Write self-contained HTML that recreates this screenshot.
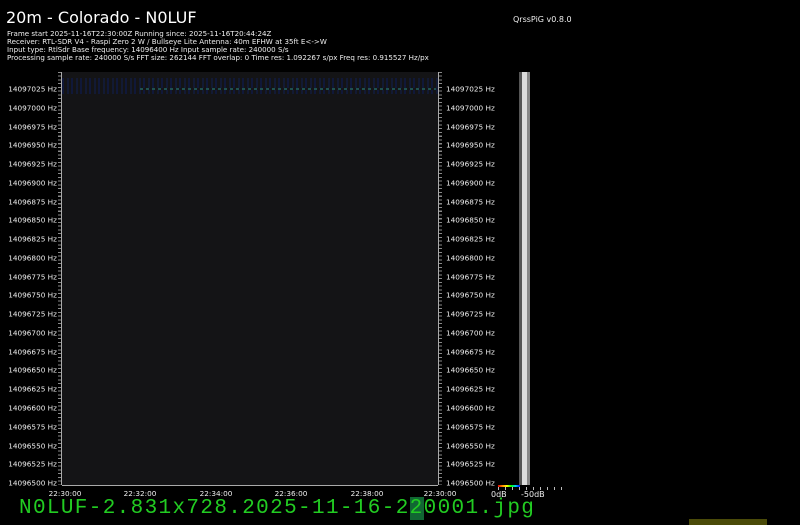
<!DOCTYPE html>
<html><head><meta charset="utf-8"><style>
body{margin:0;width:800px;height:525px;background:#000;position:relative;overflow:hidden;font-family:"DejaVu Sans","Liberation Sans",sans-serif;color:#eee}
.a{position:absolute;white-space:nowrap}
.hd{font-size:7.1px;line-height:8px;left:7px}
.l{font-size:7.3px;right:743px;transform:translateY(-50%)}
.r{font-size:7.3px;left:446px;transform:translateY(-50%)}
.t{font-size:7.3px;top:489px;transform:translateX(-50%)}
</style></head><body>
<div class="a" style="left:6px;top:8px;font-size:16px;color:#fff">20m - Colorado - N0LUF</div>
<div class="a" style="left:513px;top:15px;font-size:8px">QrssPiG v0.8.0</div>
<div class="a hd" style="top:30px">Frame start 2025-11-16T22:30:00Z Running since: 2025-11-16T20:44:24Z<br>Receiver: RTL-SDR V4 - Raspi Zero 2 W / Bullseye Lite Antenna: 40m EFHW at 35ft E&lt;-&gt;W<br>Input type: RtlSdr Base frequency: 14096400 Hz Input sample rate: 240000 S/s<br>Processing sample rate: 240000 S/s FFT size: 262144 FFT overlap: 0 Time res: 1.092267 s/px Freq res: 0.915527 Hz/px</div>
<div class="a" style="left:62px;top:72px;width:376px;height:413px;background:#141416"></div>
<div class="a" style="left:62px;top:78px;width:376px;height:16px;background:repeating-linear-gradient(90deg,#0f1a48 0 2px,#141416 2px 5px,#121c40 5px 7px,#141416 7px 9px);opacity:.7"></div>
<div class="a" style="left:140px;top:88px;width:296px;height:2px;background:repeating-linear-gradient(90deg,#1f5050 0 3px,#141416 3px 6px)"></div>
<div class="a" style="left:61px;top:72px;width:1px;height:413px;background:#aaa"></div>
<div class="a" style="left:438px;top:72px;width:1px;height:413px;background:#aaa"></div>
<div class="a" style="left:58px;top:72px;width:3px;height:413px;background:repeating-linear-gradient(#888 0 1px,transparent 1px 3.75px)"></div>
<div class="a" style="left:439px;top:72px;width:3px;height:413px;background:repeating-linear-gradient(#888 0 1px,transparent 1px 3.75px)"></div>
<div class="a" style="left:62px;top:485px;width:376px;height:1px;background:#aaa"></div>
<div class="a" style="left:519px;top:72px;width:3px;height:413px;background:#555"></div>
<div class="a" style="left:522px;top:72px;width:5px;height:413px;background:#ddd"></div>
<div class="a" style="left:527px;top:72px;width:3px;height:413px;background:#888"></div>
<div class="a" style="left:498px;top:485px;width:22px;height:2px;background:linear-gradient(90deg,#d00,#f80,#ff0,#0f0,#0cf,#00f)"></div>
<div class="a" style="left:498px;top:487px;width:70px;height:3px;background:repeating-linear-gradient(90deg,#bbb 0 1px,transparent 1px 7px)"></div>
<div class="a" style="left:491px;top:490px;font-size:8px">0dB</div>
<div class="a" style="left:521px;top:490px;font-size:8px">-50dB</div>
<div class="a t" style="left:65px">22:30:00</div>
<div class="a t" style="left:140px">22:32:00</div>
<div class="a t" style="left:216px">22:34:00</div>
<div class="a t" style="left:291px">22:36:00</div>
<div class="a t" style="left:367px">22:38:00</div>
<div class="a t" style="left:440px">22:30:00</div>
<div class="a" style="left:19px;top:497px;font-family:'Liberation Mono','DejaVu Sans Mono',monospace;font-size:21px;color:#2c2;letter-spacing:1.35px">N0LUF-2.831x728.2025-11-16-2<span style="background:#163">2</span>0001.jpg</div>
<div class="a" style="left:689px;top:519px;width:78px;height:6px;background:#4a4a08"></div>
<div class="a l" style="top:89px">14097025 Hz</div><div class="a r" style="top:89px">14097025 Hz</div>
<div class="a l" style="top:108px">14097000 Hz</div><div class="a r" style="top:108px">14097000 Hz</div>
<div class="a l" style="top:127px">14096975 Hz</div><div class="a r" style="top:127px">14096975 Hz</div>
<div class="a l" style="top:145px">14096950 Hz</div><div class="a r" style="top:145px">14096950 Hz</div>
<div class="a l" style="top:164px">14096925 Hz</div><div class="a r" style="top:164px">14096925 Hz</div>
<div class="a l" style="top:183px">14096900 Hz</div><div class="a r" style="top:183px">14096900 Hz</div>
<div class="a l" style="top:202px">14096875 Hz</div><div class="a r" style="top:202px">14096875 Hz</div>
<div class="a l" style="top:220px">14096850 Hz</div><div class="a r" style="top:220px">14096850 Hz</div>
<div class="a l" style="top:239px">14096825 Hz</div><div class="a r" style="top:239px">14096825 Hz</div>
<div class="a l" style="top:258px">14096800 Hz</div><div class="a r" style="top:258px">14096800 Hz</div>
<div class="a l" style="top:277px">14096775 Hz</div><div class="a r" style="top:277px">14096775 Hz</div>
<div class="a l" style="top:295px">14096750 Hz</div><div class="a r" style="top:295px">14096750 Hz</div>
<div class="a l" style="top:314px">14096725 Hz</div><div class="a r" style="top:314px">14096725 Hz</div>
<div class="a l" style="top:333px">14096700 Hz</div><div class="a r" style="top:333px">14096700 Hz</div>
<div class="a l" style="top:352px">14096675 Hz</div><div class="a r" style="top:352px">14096675 Hz</div>
<div class="a l" style="top:370px">14096650 Hz</div><div class="a r" style="top:370px">14096650 Hz</div>
<div class="a l" style="top:389px">14096625 Hz</div><div class="a r" style="top:389px">14096625 Hz</div>
<div class="a l" style="top:408px">14096600 Hz</div><div class="a r" style="top:408px">14096600 Hz</div>
<div class="a l" style="top:427px">14096575 Hz</div><div class="a r" style="top:427px">14096575 Hz</div>
<div class="a l" style="top:446px">14096550 Hz</div><div class="a r" style="top:446px">14096550 Hz</div>
<div class="a l" style="top:464px">14096525 Hz</div><div class="a r" style="top:464px">14096525 Hz</div>
<div class="a l" style="top:483px">14096500 Hz</div><div class="a r" style="top:483px">14096500 Hz</div>
</body></html>
